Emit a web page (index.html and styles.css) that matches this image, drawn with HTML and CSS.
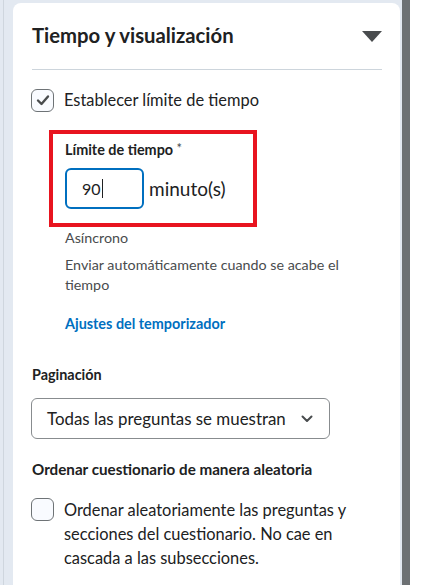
FILE: index.html
```html
<!DOCTYPE html>
<html lang="es">
<head>
<meta charset="utf-8">
<link rel="stylesheet" href="styles.css">
</head>
<body>
<div class="page">
  <div class="gutter"></div>
  <div class="card">
    <div class="head">
      <h2 class="title">Tiempo y visualización</h2>
      <svg class="caret" width="20" height="11" viewBox="0 0 20 11"><path d="M0 0H20L10 11Z" fill="#494c4e"/></svg>
    </div>
    <div class="divider"></div>
    <label class="check-row">
      <span class="box checked">
        <svg width="14" height="12" viewBox="0 0 14 12"><path d="M2 6.5L5.5 10L12 2.5" fill="none" stroke="#494c4e" stroke-width="2.4" stroke-linecap="round" stroke-linejoin="round"/></svg>
      </span>
      <span class="check-label">Establecer límite de tiempo</span>
    </label>
    <div class="sub">
      <div class="highlight">
        <div class="field-label">Límite de tiempo <span class="req">*</span></div>
        <div class="input-row">
          <div class="num-input">90<span class="cursor"></span></div>
          <span class="unit">minuto(s)</span>
        </div>
      </div>
      <div class="muted first">Asíncrono</div>
      <div class="muted">Enviar automáticamente cuando se acabe el tiempo</div>
      <a class="link">Ajustes del temporizador</a>
    </div>
    <div class="section-label pag">Paginación</div>
    <div class="select">
      <span>Todas las preguntas se muestran</span>
      <svg width="12" height="8" viewBox="0 0 12 8"><path d="M1.5 1.5L6 6L10.5 1.5" fill="none" stroke="#494c4e" stroke-width="2" stroke-linecap="round" stroke-linejoin="round"/></svg>
    </div>
    <div class="section-label ord">Ordenar cuestionario de manera aleatoria</div>
    <label class="check-row multi">
      <span class="box"></span>
      <span class="check-label">Ordenar aleatoriamente las preguntas y secciones del cuestionario. No cae en cascada a las subsecciones.</span>
    </label>
  </div>
  <div class="gap"></div>
  <div class="scrollbar"></div>
  <div class="tail"></div>
</div>
</body>
</html>
```

FILE: styles.css
```css
html, body {
  margin: 0;
  padding: 0;
}
body {
  font-family: Lato, "Noto Sans", sans-serif;
  color: #202122;
}
.page {
  display: flex;
  height: 585px;
  overflow: hidden;
  background: #e3e9f1;
}
.gutter {
  width: 9px;
  margin-left: 3px;
  border-left: 1px solid #cfd6de;
}
.card {
  width: 350px;
  margin-top: 3px;
  background: #fff;
  border-radius: 8px 8px 0 0;
  padding: 17px 18px 0 19px;
}
.head {
  display: flex;
  align-items: center;
  justify-content: space-between;
  height: 30px;
}
.title {
  margin: 0;
  font-size: 20.3px;
  font-weight: 700;
  line-height: 24px;
  color: #202122;
}
.caret {
  margin-top: 3px;
}
.divider {
  height: 1px;
  background: #cdd5dc;
  margin-top: 19px;
}
.check-row {
  display: flex;
  align-items: center;
  gap: 10px;
  margin-top: 18px;
}
.box {
  width: 21px;
  height: 21px;
  border: 1.5px solid #6e7376;
  border-radius: 6px;
  background: #f9fbff;
  display: flex;
  align-items: center;
  justify-content: center;
  flex: none;
  margin-left: -1px;
}
.check-label {
  font-size: 16.4px;
  line-height: 24px;
  color: #202122;
}
.sub {
  padding-left: 33px;
  margin-top: 18px;
}
.highlight {
  width: 188px;
  margin-left: -16px;
  border: 4px solid #e8141f;
  padding: 6px 0 14px 12px;
}
.field-label {
  font-size: 14.4px;
  font-weight: 700;
  line-height: 20px;
  color: #202122;
}
.req {
  font-weight: 400;
  font-size: 13px;
  color: #494c4e;
  position: relative;
  top: -2px;
}
.input-row {
  display: flex;
  align-items: center;
  gap: 5px;
  margin-top: 8px;
}
.num-input {
  box-sizing: border-box;
  width: 79px;
  height: 41px;
  border: 2px solid #006fbf;
  border-radius: 6px;
  display: flex;
  align-items: center;
  padding-left: 15px;
  font-size: 16px;
  color: #202122;
}
.cursor {
  display: inline-block;
  width: 1.5px;
  height: 19px;
  background: #202122;
  margin-left: 1px;
}
.unit {
  font-size: 19px;
  color: #202122;
}
.muted {
  font-size: 14.3px;
  line-height: 20px;
  color: #494c4e;
  width: 290px;
}
.muted.first {
  margin-top: 1px;
  margin-bottom: 7px;
}
.link {
  display: block;
  margin-top: 19px;
  font-size: 14.4px;
  font-weight: 700;
  line-height: 20px;
  color: #006fbf;
}
.section-label {
  font-size: 14.4px;
  font-weight: 700;
  line-height: 20px;
  color: #202122;
}
.section-label.pag {
  margin-top: 31px;
}
.select {
  box-sizing: border-box;
  width: 299px;
  height: 41px;
  margin-top: 13px;
  margin-left: -1px;
  border: 1px solid #888c8f;
  border-radius: 6px;
  display: flex;
  align-items: center;
  justify-content: space-between;
  padding: 0 16px 0 15px;
  font-size: 16.9px;
  color: #202122;
}
.section-label.ord {
  margin-top: 20px;
  font-size: 15.2px;
}
.check-row.multi {
  align-items: flex-start;
  margin-top: 19px;
}
.check-row.multi .check-label {
  line-height: 24px;
  width: 300px;
}
.gap {
  width: 2px;
}
.scrollbar {
  width: 8px;
  background: #6d7174;
}
.tail {
  flex: 1;
  background: #fff;
}
```
